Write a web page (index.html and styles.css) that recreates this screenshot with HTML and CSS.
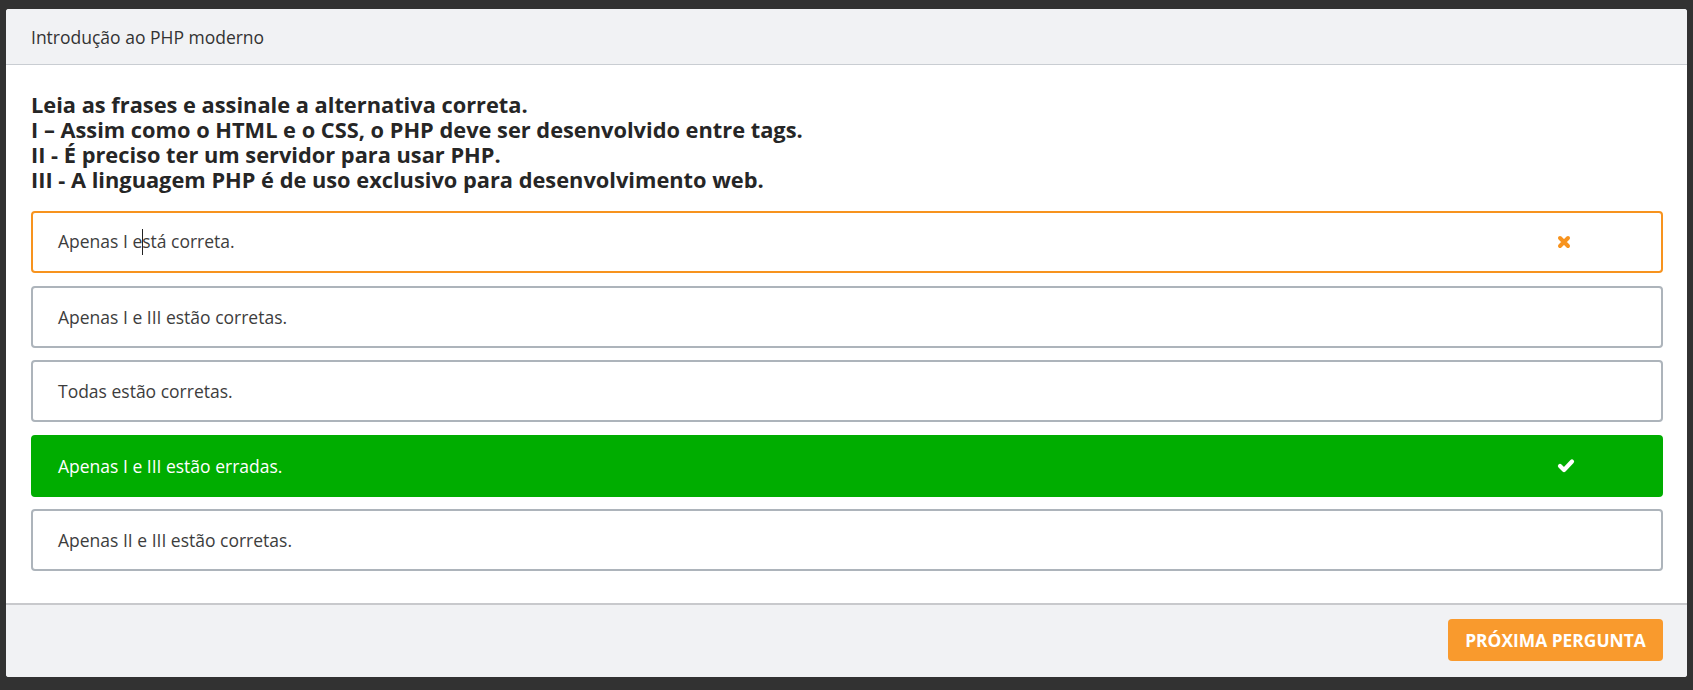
FILE: index.html
```html
<!DOCTYPE html>
<html lang="pt-BR">
<head>
<meta charset="utf-8">
<title>Introdução ao PHP moderno</title>
<link rel="stylesheet" href="styles.css">
</head>
<body>
<div class="modal">
  <div class="modal-header">Introdução ao PHP moderno</div>
  <div class="modal-body">
    <div class="question">
      Leia as frases e assinale a alternativa correta.<br>
      I – Assim como o HTML e o CSS, o PHP deve ser desenvolvido entre tags.<br>
      II - É preciso ter um servidor para usar PHP.<br>
      III - A linguagem PHP é de uso exclusivo para desenvolvimento web.
    </div>
    <div class="options">
      <div class="option wrong">
        <span class="label">Apenas I e<span class="caret"></span>stá correta.</span>
        <span class="icon icon-x">
          <svg width="14" height="14" viewBox="0 0 14 14"><path d="M3 3L11 11M11 3L3 11" stroke="#f7931e" stroke-width="4" stroke-linecap="round" fill="none"/></svg>
        </span>
      </div>
      <div class="option"><span class="label">Apenas I e III estão corretas.</span></div>
      <div class="option"><span class="label">Todas estão corretas.</span></div>
      <div class="option right">
        <span class="label">Apenas I e III estão erradas.</span>
        <span class="icon">
          <svg width="18" height="15" viewBox="0 0 18 15"><path d="M3 8L7 12L15 3.5" stroke="#ffffff" stroke-width="4.2" stroke-linecap="round" stroke-linejoin="round" fill="none"/></svg>
        </span>
      </div>
      <div class="option"><span class="label">Apenas II e III estão corretas.</span></div>
    </div>
  </div>
  <div class="modal-footer">
    <button class="btn-next">PRÓXIMA PERGUNTA</button>
  </div>
</div>
</body>
</html>
```
FILE: styles.css
```css
html, body {
  margin: 0;
  padding: 0;
  background: #323232;
}
body {
  padding: 9px 6px 13px 6px;
  font-family: "Open Sans", "Noto Sans", sans-serif;
}
.modal {
  background: #ffffff;
  border-radius: 3px;
  overflow: hidden;
  height: 668px;
  display: flex;
  flex-direction: column;
}
.modal-header {
  background: #f1f2f4;
  height: 55px;
  flex: none;
  border-bottom: 1px solid #c9cdd2;
  display: flex;
  align-items: center;
  padding-left: 25px;
  font-size: 17.5px;
  color: #333333;
}
.modal-body {
  flex: 1;
  padding: 27px 24px 0 25px;
}
.question {
  font-size: 21.8px;
  font-weight: 700;
  line-height: 25px;
  color: #262626;
  margin-bottom: 19px;
}
.options {
  display: flex;
  flex-direction: column;
  gap: 12.5px;
}
.option {
  height: 62px;
  box-sizing: border-box;
  border: 2px solid #adb4bb;
  border-radius: 4px;
  display: flex;
  align-items: center;
  justify-content: space-between;
  padding: 0 86px 0 25px;
  font-size: 17.5px;
  color: #3d3d3d;
}
.option.wrong {
  border-color: #f7931e;
}
.option.right {
  border-color: #00ad00;
  background: #00ad00;
  color: #ffffff;
}
.icon {
  display: flex;
  width: 18px;
  justify-content: center;
}
.icon-x {
  justify-content: flex-start;
  padding-left: 1px;
}
.caret {
  display: inline-block;
  width: 0;
  height: 26px;
  border-left: 1px solid #222;
  margin-right: -1px;
  vertical-align: -7px;
}
.modal-footer {
  background: #f1f2f4;
  border-top: 2px solid #c8c9cc;
  height: 74px;
  flex: none;
  display: flex;
  justify-content: flex-end;
  align-items: flex-start;
  padding: 14px 24px 0 0;
  box-sizing: border-box;
}
.btn-next {
  background: #f99a2d;
  color: #ffffff;
  border: none;
  border-radius: 4px;
  height: 42px;
  width: 215px;
  font-family: "Open Sans", "Noto Sans", sans-serif;
  font-weight: 700;
  font-size: 17.4px;
}
```
